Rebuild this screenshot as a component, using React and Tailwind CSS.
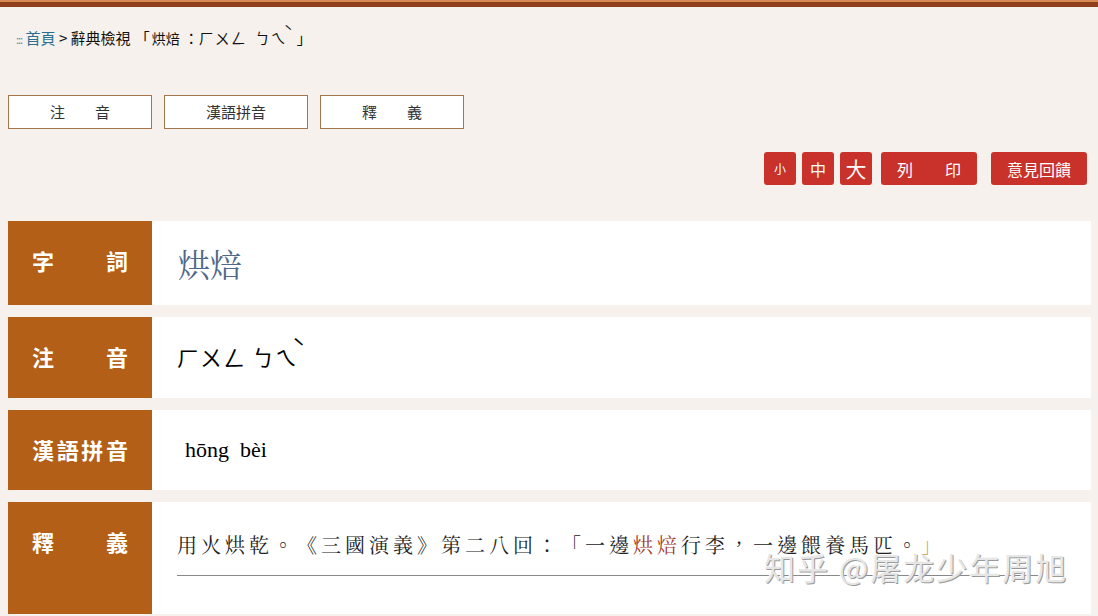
import React from "react";

const sans = { fontFamily: '"Noto Sans CJK TC", "Noto Sans", sans-serif' };
const serif = { fontFamily: '"Noto Serif CJK TC", "Liberation Serif", "Noto Sans CJK TC", serif' };

function Label({ chars }) {
  return (
    <div className="w-[144px] shrink-0 bg-[#b35f17] px-[24px] pt-[25px]">
      <div className="flex justify-between text-[22px] leading-[28px] font-bold text-white" style={sans}>
        {chars.map((c, i) => (
          <span key={i}>{c}</span>
        ))}
      </div>
    </div>
  );
}

function Row({ chars, children, h }) {
  return (
    <div className={`flex ml-[8px] mr-[7px] ${h}`}>
      <Label chars={chars} />
      <div className="flex-1 bg-white">{children}</div>
    </div>
  );
}

export default function App() {
  return (
    <div className="relative w-[1098px] h-[616px] overflow-hidden bg-[#f6f1ec]" style={sans}>
      <div className="h-[2px] bg-[#d88a55]" />
      <div className="h-[5px] bg-[#8f3f1c]" />

      <div className="pl-[16px] pt-[21px] text-[15px] leading-[20px] text-[#111] [text-spacing-trim:space-all]">
        <span className="text-[#5a8a9a] text-[11px] tracking-[-1px]">:::</span>{" "}
        <span className="text-[#2a6f92]">首頁</span> &gt; 辭典檢視<span className="ml-[4px]">「</span><span className="text-[14px] ml-[2px]">烘焙</span>
        <span className="ml-[4px]">：</span>
        <span className="tracking-[1px]">ㄏㄨㄥ</span>
        <span className="ml-[8px] tracking-[1px]">ㄅㄟ</span>
        <span className="relative -top-[7px] -ml-[3px]">ˋ</span>
        <span className="ml-[4px]">」</span>
      </div>

      <div className="flex gap-[12px] pl-[8px] mt-[46px]">
        {["注　　音", "漢語拼音", "釋　　義"].map((t) => (
          <div
            key={t}
            className="w-[144px] h-[34px] flex items-center justify-center border border-[#a4774f] bg-white text-[15px] text-[#333]"
          >
            {t}
          </div>
        ))}
      </div>

      <div className="flex justify-end items-center gap-[6px] pr-[11px] mt-[23px] text-white">
        <div className="w-[32px] h-[33px] flex items-center justify-center rounded-[3px] bg-[#c8322b] text-[12px]">小</div>
        <div className="w-[32px] h-[33px] flex items-center justify-center rounded-[3px] bg-[#c8322b] text-[16px]">中</div>
        <div className="w-[32px] h-[33px] flex items-center justify-center rounded-[3px] bg-[#c8322b] text-[21px]">大</div>
        <div className="ml-[3px] w-[96px] h-[33px] flex items-center justify-center rounded-[3px] bg-[#c8322b] text-[16px]">列　　印</div>
        <div className="ml-[8px] w-[96px] h-[33px] flex items-center justify-center rounded-[3px] bg-[#c8322b] text-[16px]">意見回饋</div>
      </div>

      <div className="mt-[36px] flex flex-col gap-[12px]">
        <Row chars={["字", "詞"]} h="h-[84px]">
          <div className="pl-[26px] pt-[22px] text-[32px] leading-[40px] text-[#4f6a88]" style={serif}>
            烘焙
          </div>
        </Row>
        <Row chars={["注", "音"]} h="h-[81px]">
          <div className="pl-[25px] pt-[23px] text-[22px] leading-[32px] text-black" style={sans}>
            <span className="tracking-[1px]">ㄏㄨㄥ</span>
            <span className="ml-[6px] tracking-[1px]">ㄅㄟ</span>
            <span className="relative -top-[10px] -ml-[6px]">ˋ</span>
          </div>
        </Row>
        <Row chars={["漢", "語", "拼", "音"]} h="h-[80px]">
          <div className="pl-[33px] pt-[24px] text-[22px] leading-[32px] text-black" style={{ fontFamily: '"Liberation Serif", serif' }}>
            hōng&nbsp;&nbsp;bèi
          </div>
        </Row>
        <Row chars={["釋", "義"]} h="h-[112px]">
          <div className="pl-[25px] pr-[50px] pt-[28px]">
            <div className="text-[20px] leading-[30px] tracking-[4px] text-[#222] pb-[15px] border-b border-[#888] [text-spacing-trim:space-all]" style={serif}>
              用火烘乾。《三國演義》第二八回：「一邊<span className="text-[#a23a2a]">烘焙</span>行李，一邊餵養馬匹。<span className="text-[#c89a3a]">」</span>
            </div>
          </div>
        </Row>
      </div>

      <div
        className="absolute left-[764px] top-[547px] text-[31px] leading-[40px] text-[#e6e6e6] tracking-[2px]"
        style={{
          fontFamily: '"Noto Sans CJK SC", sans-serif',
          textShadow: "1px 1px 0 #9a9a9a, -1px 0 0 #ffffff",
        }}
      >
        知乎 @屠龙少年周旭
      </div>
    </div>
  );
}
